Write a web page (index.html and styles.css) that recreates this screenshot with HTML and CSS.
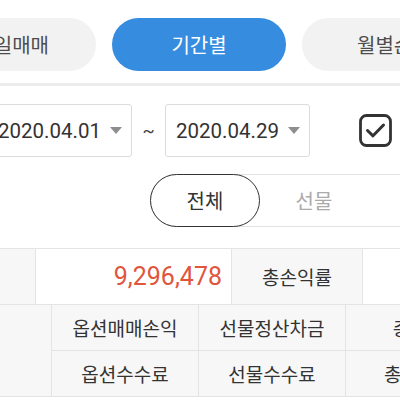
FILE: index.html
```html
<!DOCTYPE html>
<html lang="ko">
<head>
<meta charset="utf-8">
<link rel="stylesheet" href="styles.css">
</head>
<body>
<div class="page">
  <div class="tabs">
    <div class="tab first">당일매매</div>
    <div class="tab active">기간별</div>
    <div class="tab last">월별손익</div>
  </div>
  <div class="sep"></div>
  <div class="dates">
    <div class="datebox"><span class="dtext">2020.04.01</span><span class="caret"></span></div>
    <div class="tilde">~</div>
    <div class="datebox"><span class="dtext">2020.04.29</span><span class="caret"></span></div>
    <div class="check">
      <svg width="33" height="33" viewBox="0 0 33 33"><rect x="1.5" y="1.5" width="30" height="30" rx="6" ry="6" fill="none" stroke="#333" stroke-width="2.8"/><path d="M8.5 16.5 L14 21.8 L24.5 11" fill="none" stroke="#333" stroke-width="3" stroke-linecap="round" stroke-linejoin="round"/></svg>
    </div>
  </div>
  <div class="seg">
    <div class="seg-item on">전체</div>
    <div class="seg-item">선물</div>
    <div class="seg-item">옵션</div>
  </div>
  <div class="table">
    <div class="row1">
      <div class="cell lab"></div>
      <div class="cell val"><span class="red">9,296,478</span></div>
      <div class="cell lab">총손익률</div>
      <div class="cell val"></div>
    </div>
    <div class="grid2">
      <div class="cell lab span"></div>
      <div class="cell lab">옵션매매손익</div>
      <div class="cell lab">선물정산차금</div>
      <div class="cell lab">총손익</div>
      <div class="cell lab">옵션수수료</div>
      <div class="cell lab">선물수수료</div>
      <div class="cell lab">총수수료</div>
    </div>
  </div>
</div>
</body>
</html>
```
FILE: styles.css
```css
html, body {
  margin: 0;
  padding: 0;
  background: #ffffff;
}
body {
  width: 400px;
  height: 400px;
  overflow: hidden;
  font-family: Roboto, "Noto Sans CJK KR", sans-serif;
  color: #333333;
}
.page {
  width: 400px;
}
.tabs {
  display: flex;
  gap: 16px;
  padding-top: 18px;
  margin-left: -78px;
  width: 600px;
}
.tab {
  flex: 0 0 174px;
  height: 53px;
  box-sizing: border-box;
  border-radius: 27px;
  background: #f2f2f2;
  color: #4d4d4d;
  font-size: 20px;
  display: flex;
  align-items: center;
  justify-content: center;
}
.tab.first {
  justify-content: flex-end;
  padding-right: 47px;
}
.tab.last {
  justify-content: flex-start;
  padding-left: 55px;
}
.tab.active {
  background: #368de0;
  color: #ffffff;
}
.sep {
  margin-top: 12px;
  height: 3px;
  background: #ececec;
}
.dates {
  display: flex;
  align-items: center;
  margin-top: 18px;
  margin-left: -13px;
  width: 500px;
}
.datebox {
  flex: 0 0 145px;
  height: 53px;
  box-sizing: border-box;
  border: 1px solid #dcdcdc;
  border-radius: 3px;
  display: flex;
  align-items: center;
  padding-left: 10px;
}
.dtext {
  font-size: 20.5px;
  color: #333;
  width: 102px;
}
.caret {
  width: 0;
  height: 0;
  margin-left: 10px;
  border-left: 6.5px solid transparent;
  border-right: 6.5px solid transparent;
  border-top: 7px solid #8e8e8e;
}
.tilde {
  flex: 0 0 33px;
  text-align: center;
  font-size: 18px;
  color: #444;
}
.check {
  margin-left: 49px;
  display: flex;
}
.seg {
  display: flex;
  margin-top: 17px;
  margin-left: 150px;
  width: 340px;
  height: 53px;
  box-sizing: border-box;
  border: 1px solid #e3e3e3;
  border-radius: 27px;
}
.seg-item {
  flex: 0 0 108px;
  display: flex;
  align-items: center;
  justify-content: center;
  font-size: 20px;
  color: #aaaaaa;
}
.seg-item.on {
  margin: -1px 0 -1px -1px;
  border: 1.5px solid #333;
  border-radius: 27px;
  color: #333;
}
.table {
  margin-top: 21px;
  width: 400px;
  border-top: 1px solid #e4e4e4;
  border-bottom: 1px solid #e4e4e4;
  background: #e4e4e4;
  display: flex;
  flex-direction: column;
  gap: 1px;
}
.row1 {
  display: grid;
  grid-template-columns: 35px 195px 130px 1fr;
  grid-template-rows: 55px;
  gap: 1px;
}
.grid2 {
  display: grid;
  grid-template-columns: 51px 146px 146px 146px;
  grid-template-rows: 45px 45px;
  gap: 1px;
}
.cell {
  display: flex;
  align-items: center;
  justify-content: center;
  font-size: 19px;
  color: #333;
  white-space: nowrap;
  overflow: hidden;
}
.cell.lab {
  background: #f7f7f7;
}
.cell.val {
  background: #ffffff;
  justify-content: flex-end;
  padding-right: 9px;
}
.cell.span {
  grid-row: span 2;
}
.red {
  color: #e0553b;
  font-size: 25px;
}
```
